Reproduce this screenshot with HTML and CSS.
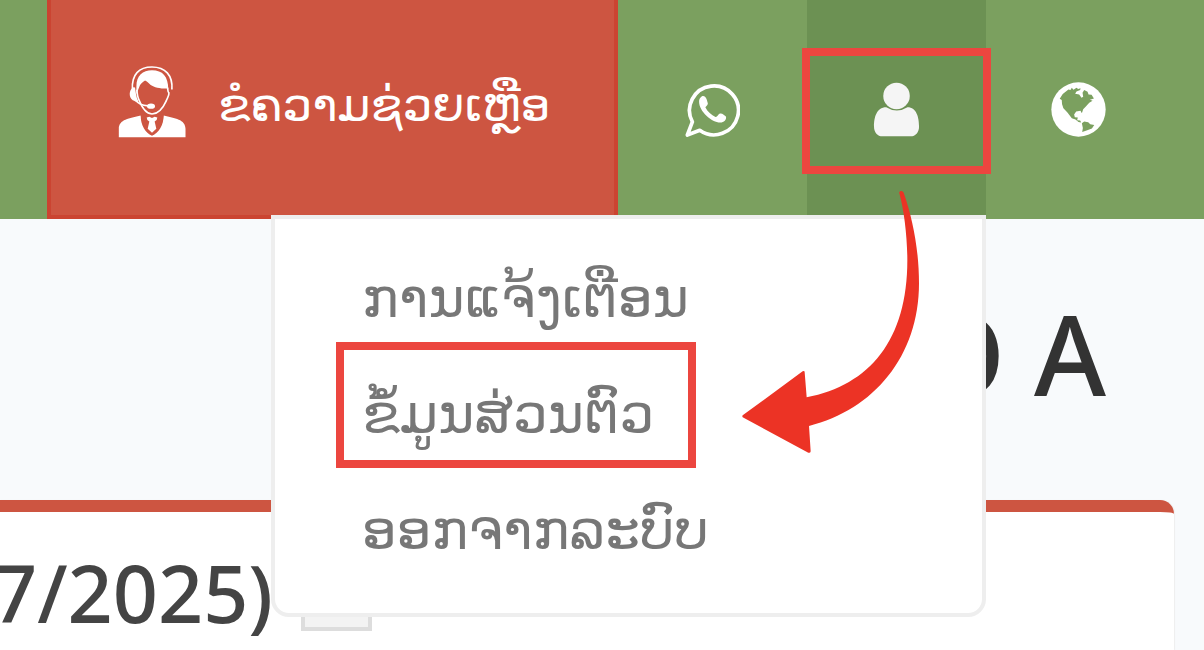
FILE: index.html
```html
<!DOCTYPE html>
<html lang="lo">
<head>
    <meta charset="UTF-8">
    <meta name="viewport" content="width=device-width, initial-scale=1.0">
    <title>ຂໍ້ມູນສ່ວນຕົວ</title>
    <link rel="stylesheet" href="styles.css">
</head>
<body>
    <!-- Top bar -->
    <header class="topbar">
        <button type="button" class="help-button">
            <svg class="icon-agent" viewBox="262 76 204 220" aria-hidden="true">
                <path class="line" d="M305 150C302 105 325 82 364 82C404 82 427 107 424 150"/>
                <path class="fill" d="M317 164V140C317 108 336 92 364 92C396 92 413 110 413 150L409 147C386 147 371 143 360 136C353 131 349 125 343 123C336 128 328 133 325 144Z"/>
                <path class="line" d="M318 150C320 160 319 168 323 177C333 204 346 223 364 224C383 223 398 204 407 184C409 176 416 170 415 160C411 158 412 152 411 144"/>
                <path class="fill" d="M308 143C293 151 294 175 306 182C312 184 316 187 319 189L322 184C316 172 315 158 313 144Z"/>
                <path class="line" d="M315 181C322 193 337 198 352 199"/>
                <ellipse class="fill" cx="361" cy="200" rx="12" ry="8"/>
                <path class="fill" d="M264 294V268C264 240 296 236 330 228C330 258 344 280 364 289C384 280 399 258 399 228C433 236 465 240 465 268V294Z"/>
                <path class="tie-gap" d="M330 226C332 256 346 278 364 288C382 278 397 256 399 226"/>
                <path class="fill" d="M348 234L356 232L364 236L372 232L380 234L378 242L372 246L377 268L364 280L351 268L356 246L350 242Z"/>
            </svg>
            <span>ຂໍຄວາມຊ່ວຍເຫຼືອ</span>
        </button>
        <button type="button" class="nav-button chat" aria-label="WhatsApp">
            <svg class="nav-icon" viewBox="0 0 164 164" aria-hidden="true">
                <path class="ring" d="M7 158L22 119A73 73 0 1 1 44 144Z"/>
                <path class="fill" d="M46 47C52 38 62 42 65 53L68 63C69 69 61 72 61 76C67 88 79 99 91 104C96 105 99 96 104 94C110 92 119 99 122 103C125 112 116 121 105 121C80 121 42 88 42 59C42 54 43 50 46 47Z"/>
            </svg>
        </button>
        <div class="user-nav">
            <button type="button" class="nav-button user" aria-label="ບັນຊີ" aria-expanded="true">
                <svg class="nav-icon" viewBox="0 0 142 166" aria-hidden="true">
                    <circle cx="71" cy="42" r="40"/>
                    <path d="M40 76C10 76 3 108 3 134C3 152 14 164 28 164H114C128 164 139 152 139 134C139 108 132 76 104 76Q72 96 40 76Z"/>
                </svg>
            </button>
            <ul class="user-menu">
                <li><a href="#">ການແຈ້ງເຕືອນ</a></li>
                <li><a href="#" class="marked">ຂໍ້ມູນສ່ວນຕົວ</a></li>
                <li><a href="#">ອອກຈາກລະບົບ</a></li>
            </ul>
            <span class="user-frame"></span>
            <svg class="arrow" viewBox="36 33 534 786" aria-hidden="true">
                <path d="M508 40C506 31 518 31 521 38C548 115 567 210 567 310C567 530 430 690 237 738L242 814Q241 820 235 818L38 712Q36 709 38 706L218 574Q224 571 224 577L230 652C420 615 532 480 532 240C532 170 522 90 508 40Z"/>
            </svg>
        </div>
        <button type="button" class="nav-button globe" aria-label="ພາສາ">
            <svg class="nav-icon" viewBox="0 0 164 164" aria-hidden="true">
                <circle class="fill" cx="82" cy="82" r="81"/>
                <path class="land" d="M26 50L35 36L52 22L58 24L62 17L67 23L76 17L81 21L88 19L87 24L76 28L72 35L84 37L91 47L96 44L94 32L99 24L109 29L112 37L121 38L128 49L116 53L124 56L114 62L106 71L96 81L92 93L88 86L75 88L69 97L71 105L80 106L78 114L87 115L90 121L82 119L73 112L62 108L49 91L37 78L33 66L32 54Z"/>
                <path class="land" d="M92 123L99 118L111 120L117 126L129 128L122 139L108 144L93 149L95 137Z"/>
            </svg>
        </button>
    </header>

    <!-- Page content -->
    <main class="content">
        <h1 class="page-title">O A</h1>
        <section class="panel">
            <h2>7/2025)</h2>
            <button type="button" class="panel-button" aria-label="ເລືອກ"></button>
        </section>
    </main>
</body>
</html>
```

FILE: styles.css
```css
* {
    margin: 0;
    padding: 0;
    box-sizing: border-box;
}

body {
    display: flex;
    flex-direction: column;
    height: 100vh;
    background: #f8fafc;
    font-family: "DejaVu Sans", sans-serif;
}

button {
    border: 0;
    font-family: inherit;
    cursor: pointer;
}

/* Top bar */
.topbar {
    display: flex;
    flex: none;
    justify-content: flex-end;
    height: 219px;
    padding-right: 34px;
    background: #7ba05f;
}

.help-button {
    display: flex;
    align-items: center;
    gap: 32px;
    width: 571px;
    padding: 0 0 12px 67px;
    background: #cd5541;
    border: 4px solid #cb4431;
    border-top: 0;
    color: #fff;
    font-size: 47px;
    white-space: nowrap;
}

.help-button span {
    padding-top: 6px;
}

.icon-agent {
    flex: none;
    width: 68px;
    height: 73px;
}

.nav-button {
    display: flex;
    align-items: center;
    justify-content: center;
    width: 179px;
    height: 100%;
    background: transparent;
}

.nav-button.chat {
    width: 189px;
}

.nav-button.globe {
    width: 184px;
}

.nav-icon {
    height: 55px;
}

.fill {
    fill: #fff;
}

.line {
    fill: none;
    stroke: #fff;
    stroke-width: 5;
}

.tie-gap {
    fill: #cd5541;
}

.ring {
    fill: none;
    stroke: #fff;
    stroke-width: 11;
    stroke-linejoin: round;
}

.land {
    fill: #7ba05f;
}

/* User menu */
.user-nav {
    position: relative;
    background: #6c9153;
}

.user .nav-icon {
    fill: #f5f5f5;
}

.user-menu {
    position: absolute;
    top: 215px;
    right: 0;
    width: 715px;
    padding: 12px 61px 34px;
    background: #fff;
    border: 4px solid #eee;
    border-radius: 0 0 18px 18px;
    list-style: none;
}

.user-menu li {
    display: flex;
    height: 116px;
    align-items: center;
}

.user-menu a {
    display: flex;
    align-items: center;
    height: 126px;
    padding: 18px 26px 0 18px;
    border: 8px solid transparent;
    color: #777;
    font-size: 55px;
    text-decoration: none;
    white-space: nowrap;
}

.user-menu .marked {
    min-width: 360px;
    border-color: #ec463f;
}

.user-frame {
    position: absolute;
    top: 48px;
    left: -5px;
    right: -5px;
    height: 126px;
    border: 8px solid #ec463f;
    pointer-events: none;
}

.arrow {
    position: absolute;
    top: 191px;
    left: -65px;
    width: 178px;
    height: 262px;
    fill: #ec3325;
    pointer-events: none;
}

/* Page content */
.content {
    display: flex;
    flex: 1;
    flex-direction: column;
    padding-right: 30px;
}

.page-title {
    height: 281px;
    padding-right: 68px;
    color: #333;
    font-family: "Noto Sans", sans-serif;
    font-size: 110px;
    font-weight: 500;
    line-height: 268px;
    text-align: right;
}

.panel {
    display: flex;
    flex: 1;
    gap: 28px;
    padding-top: 48px;
    background: #fff;
    border-top: 12px solid #cd5541;
    border-radius: 0 14px 0 0;
    box-shadow: 1px 0 1px #eee;
}

.panel h2 {
    margin-left: -8px;
    color: #444;
    font-family: "Noto Sans", sans-serif;
    font-size: 79px;
    font-weight: 500;
    line-height: 66px;
}

.panel-button {
    width: 71px;
    height: 71px;
    background: #f3f3f3;
    border: 4px solid #ddd;
}
```
